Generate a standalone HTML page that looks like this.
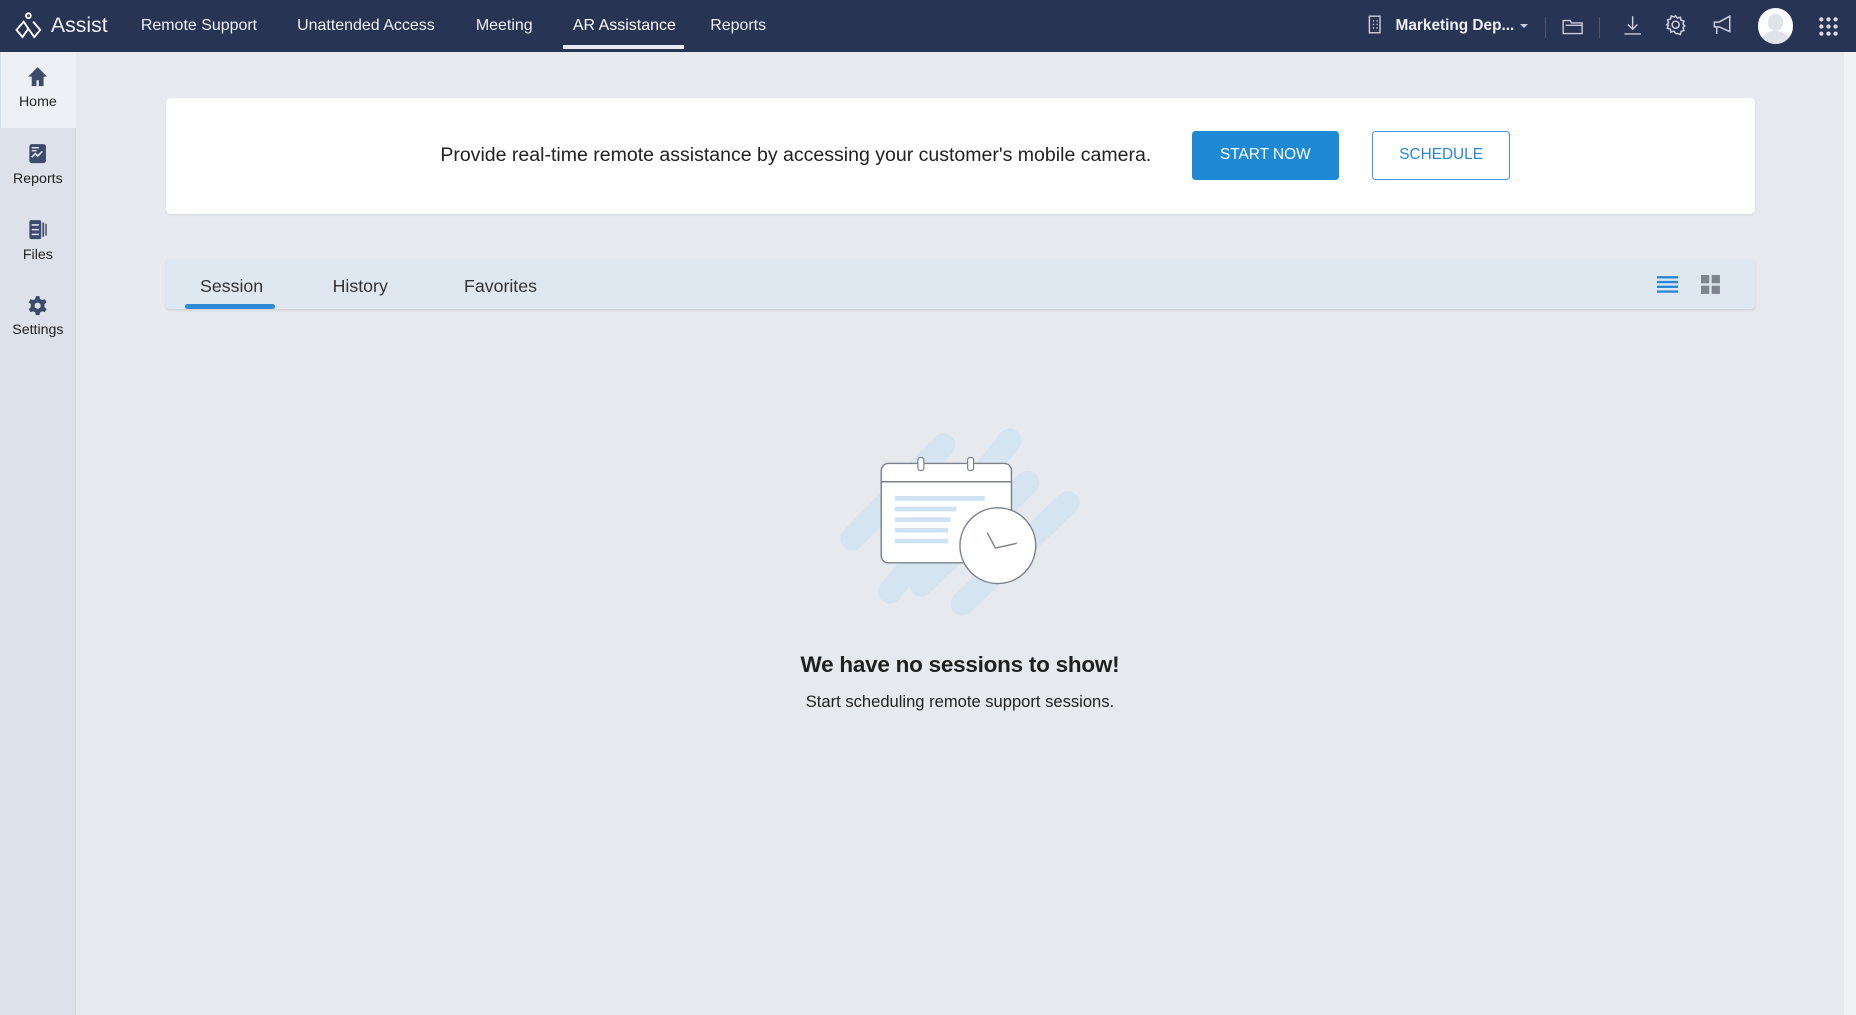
<!DOCTYPE html>
<html><head><meta charset="utf-8"><style>
*{box-sizing:border-box;margin:0;padding:0}
html,body{width:1856px;height:1015px;overflow:hidden;background:#e6e9ee}
#w{zoom:1.18367;width:1568px;height:858px;position:relative;font-family:"Liberation Sans",sans-serif;background:#e6e9ee}
.top{position:absolute;left:0;top:0;width:1568px;height:44px;background:#283453;color:#fff}
.top .n{position:absolute;top:14px;font-size:13.5px;color:#eef1f6}
.side{position:absolute;left:0;top:44px;width:64px;height:814px;background:#dde1e9;border-right:1px solid #d3d7df}
.si{position:absolute;left:0;width:64px;text-align:center;font-size:12px;color:#222}
.card{position:absolute;left:140px;top:83px;width:1343px;height:98px;background:#fff;border-radius:4px;box-shadow:0 1px 2px rgba(0,0,0,.06)}
.tabs{position:absolute;left:140px;top:219px;width:1343px;height:42px;background:#dfe7f0;border-radius:3px;box-shadow:0 1px 2px rgba(0,0,0,.1)}
.tab{position:absolute;top:14px;font-size:15px;color:#333}
</style></head><body><div id="w">
<div class="top">
<svg style="position:absolute;left:11px;top:9px" width="26" height="26" viewBox="0 0 26 26" fill="none" stroke="#fff" stroke-width="1.6"><circle cx="13" cy="4" r="2"/><path d="M9 9 L3 16 L8 22 L13 15 Z M17 9 L23 16 L18 22 L13 15"/></svg>
<div class="n" style="left:43px;top:11px;font-size:18px">Assist</div>
<div class="n" style="left:119px">Remote Support</div>
<div class="n" style="left:251px">Unattended Access</div>
<div class="n" style="left:402px">Meeting</div>
<div class="n" style="left:484px;color:#fff">AR Assistance</div>
<div style="position:absolute;left:476px;top:38px;width:102px;height:3px;background:#e8ecf2"></div>
<div class="n" style="left:600px">Reports</div>
<svg style="position:absolute;left:1155px;top:13px" width="14" height="16" viewBox="0 0 14 16" fill="none" stroke="#ccd" stroke-width="1.2"><rect x="2" y="1" width="9" height="14"/><path d="M5 5h1M8 5h1M5 8h1M8 8h1M5 11h1M8 11h1"/></svg>
<div class="n" style="left:1179px;font-size:13px;font-weight:bold">Marketing Dep...</div>
<div style="position:absolute;left:1284px;top:20px;border:4px solid transparent;border-top:4px solid #ccd"></div>
<div style="position:absolute;left:1305px;top:14px;width:1px;height:18px;background:#556"></div>
<svg style="position:absolute;left:1320px;top:14px" width="18" height="16" fill="none" stroke="#ccd" stroke-width="1.2"><path d="M1 3h6l1 2h9v9H1zM3 7h14"/></svg>
<div style="position:absolute;left:1351px;top:14px;width:1px;height:18px;background:#556"></div>
<svg style="position:absolute;left:1370px;top:13px" width="18" height="18" fill="none" stroke="#ccd" stroke-width="1.2"><path d="M9 1v11M5 8l4 4 4-4M2 16h14"/></svg>
<svg style="position:absolute;left:1407px;top:12px" width="18" height="18" viewBox="0 0 18 18" fill="none" stroke="#ccd" stroke-width="1.3"><circle cx="9" cy="9" r="3"/><path d="M9 1.5l1.5 2 2.5-.8.5 2.5 2.5.8-.8 2.5 1.5 1.5-1.5 1.5.8 2.5-2.5.8-.5 2.5-2.5-.8L9 16.5l-1.5-2-2.5.8-.5-2.5-2.5-.8.8-2.5L1.5 9l1.5-1.5-.8-2.5 2.5-.8.5-2.5 2.5.8z"/></svg>
<svg style="position:absolute;left:1446px;top:13px" width="18" height="18" fill="none" stroke="#ccd" stroke-width="1.3"><path d="M2 6h4l9-5v13l-9-4H2zM4 10v6"/></svg>
<div style="position:absolute;left:1485px;top:7px;width:30px;height:30px;border-radius:50%;background:#fff;overflow:hidden"><div style="position:absolute;left:9px;top:5px;width:12px;height:14px;border-radius:50%;background:#dfe3ea"></div><div style="position:absolute;left:4px;top:19px;width:22px;height:16px;border-radius:50%;background:#dfe3ea"></div></div>
<svg style="position:absolute;left:1537px;top:14px" width="16" height="16" fill="#dde"><circle cx="2" cy="2" r="1.8"/><circle cx="8" cy="2" r="1.8"/><circle cx="14" cy="2" r="1.8"/><circle cx="2" cy="8" r="1.8"/><circle cx="8" cy="8" r="1.8"/><circle cx="14" cy="8" r="1.8"/><circle cx="2" cy="14" r="1.8"/><circle cx="8" cy="14" r="1.8"/><circle cx="14" cy="14" r="1.8"/></svg>
</div>
<div class="side">
<div style="position:absolute;left:0;top:0;width:64px;height:64px;background:#edf0f4;border-left:1px solid #cfe0f0"></div>
<div class="si" style="top:12px"><svg width="18" height="18" fill="#3d4a6b"><path d="M9 1L1 9h3v8h4v-5h2v5h4V9h3z"/></svg><div style="margin-top:2px">Home</div></div>
<div class="si" style="top:77px"><svg width="18" height="18" fill="#3d4a6b"><rect x="2" y="1" width="14" height="16" rx="2"/><path d="M4 12l3-3 2 2 4-4" stroke="#dde1e9" stroke-width="1.4" fill="none"/><path d="M4 4h6M4 6.5h4" stroke="#dde1e9" stroke-width="1.2"/></svg><div style="margin-top:2px">Reports</div></div>
<div class="si" style="top:141px"><svg width="18" height="18" fill="#3d4a6b"><rect x="2" y="1" width="10" height="16" rx="1.5"/><rect x="13" y="3" width="1.5" height="12"/><rect x="15.5" y="4" width="1.2" height="10"/><path d="M4 5h6M4 9h6M4 13h6" stroke="#dde1e9" stroke-width="1.3"/></svg><div style="margin-top:2px">Files</div></div>
<div class="si" style="top:205px"><svg width="18" height="18" viewBox="0 0 18 18" fill="#3d4a6b"><path d="M7.5 1h3l.5 2.3 1.8 1 2.2-.8 1.5 2.6-1.7 1.6v2.6l1.7 1.6-1.5 2.6-2.2-.8-1.8 1-.5 2.3h-3L7 14.7l-1.8-1-2.2.8-1.5-2.6 1.7-1.6V7.7L1.5 6.1 3 3.5l2.2.8 1.8-1z"/><circle cx="9" cy="9" r="2.6" fill="#dde1e9"/></svg><div style="margin-top:2px">Settings</div></div>
</div>
<div style="position:absolute;left:1558px;top:44px;width:10px;height:814px;background:#f0f2f5"></div>
<div class="card">
<div style="position:absolute;left:232px;top:39px;font-size:16.5px;color:#222">Provide real-time remote assistance by accessing your customer's mobile camera.</div>
<div style="position:absolute;left:867px;top:28px;width:124px;height:41px;background:#1e8ad6;border-radius:3px;color:#fff;font-size:13px;text-align:center;line-height:41px">START NOW</div>
<div style="position:absolute;left:1019px;top:28px;width:117px;height:41px;border:1px solid #3d95dc;border-radius:3px;color:#2b87d3;font-size:13px;text-align:center;line-height:39px">SCHEDULE</div>
</div>
<div class="tabs">
<div class="tab" style="left:29px">Session</div>
<div style="position:absolute;left:16px;top:38px;width:76px;height:4px;background:#2f8ad8;border-radius:2px"></div>
<div class="tab" style="left:141px">History</div>
<div class="tab" style="left:252px">Favorites</div>
<svg style="position:absolute;left:1260px;top:13px" width="18" height="16" stroke="#2b87d8" stroke-width="2"><path d="M0 2h18M0 6h18M0 10h18M0 14h18"/></svg>
<svg style="position:absolute;left:1297px;top:13px" width="16" height="16" fill="#7d8590"><rect x="0" y="0" width="7" height="7"/><rect x="9" y="0" width="7" height="7"/><rect x="0" y="9" width="7" height="7"/><rect x="9" y="9" width="7" height="7"/></svg>
</div>
<svg style="position:absolute;left:0;top:0" width="1568" height="858">
<g stroke="#d5e4f1" stroke-width="20" stroke-linecap="round">
<line x1="720" y1="455" x2="797" y2="376"/><line x1="752" y1="500" x2="853" y2="372"/><line x1="778" y1="494" x2="868" y2="408"/><line x1="813" y1="510" x2="902" y2="425"/>
</g>
<rect x="744.5" y="391.5" width="110" height="84" rx="6" fill="#fff" stroke="#7a808a" stroke-width="1.2"/>
<line x1="745" y1="407" x2="854" y2="407" stroke="#7a808a" stroke-width="1.2"/>
<rect x="775.5" y="386.5" width="5" height="11" rx="2" fill="#fff" stroke="#7a808a"/><rect x="817.5" y="386.5" width="5" height="11" rx="2" fill="#fff" stroke="#7a808a"/>
<g stroke="#cfe2f3" stroke-width="4"><path d="M756 421h76M756 430h52M756 439h47M756 448h45M756 457h45"/></g>
<circle cx="843" cy="461" r="32" fill="#fff" stroke="#7a808a" stroke-width="1.2"/>
<path d="M834 450l7 13 18-4" fill="none" stroke="#7a808a" stroke-width="1.2"/>
</svg>
<div style="position:absolute;left:0;width:1622px;top:551px;text-align:center;font-size:19px;font-weight:bold;color:#1f1f1f;letter-spacing:-0.2px">We have no sessions to show!</div>
<div style="position:absolute;left:0;width:1622px;top:585px;text-align:center;font-size:14px;color:#222">Start scheduling remote support sessions.</div>
</div></body></html>
